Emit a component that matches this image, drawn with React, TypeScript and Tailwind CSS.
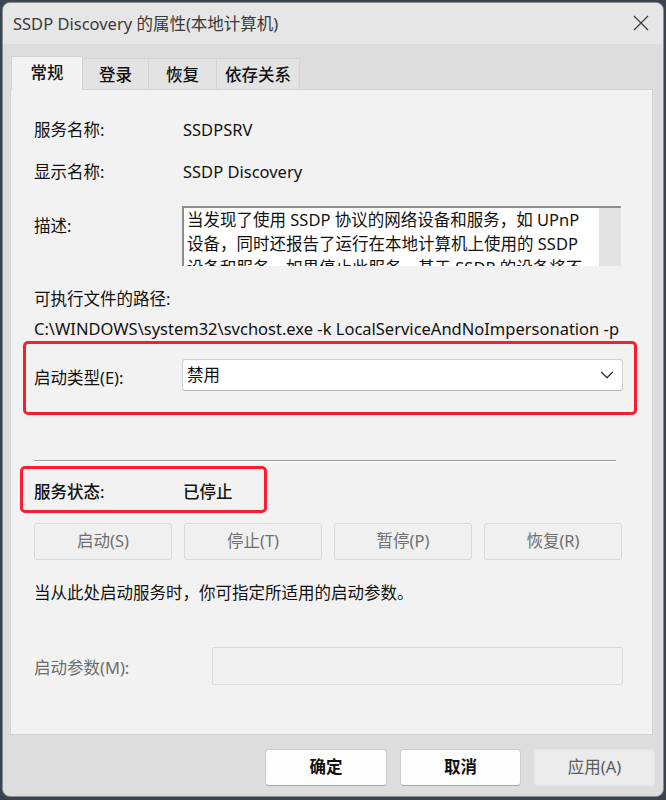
import React from 'react';
import { ChevronDown } from 'lucide-react';

const font = { fontFamily: '"Noto Sans", "Noto Sans CJK SC", sans-serif' };

const tabs = [
  { label: '常规', w: 'w-[72px]', active: true },
  { label: '登录', w: 'w-[66px]', active: false },
  { label: '恢复', w: 'w-[68px]', active: false },
  { label: '依存关系', w: 'w-[83px]', active: false },
];

const serviceButtons = ['启动(S)', '停止(T)', '暂停(P)', '恢复(R)'];

export default function App() {
  return (
    <div className="w-[666px] h-[800px] bg-[#3a4350] pt-[2px] pl-[2px]" style={font}>
      <div className="w-[662px] h-[795px] rounded-[8px] border border-[#8c8c8c] bg-[#dddddd] overflow-hidden flex flex-col text-[16.5px] text-[#111]">
        {/* Title bar */}
        <div className="h-[41px] bg-[#e6e6e6] flex items-center justify-between pl-[10px] pr-[14px] shrink-0">
          <span className="text-[16.5px] text-[#3a3a3a] pt-[1px]">SSDP Discovery 的属性(本地计算机)</span>
          <svg width="16" height="16" viewBox="0 0 16 16" className="mt-[-1px]">
            <path d="M1 1L15 15M15 1L1 15" stroke="#404040" strokeWidth="1.3" fill="none" />
          </svg>
        </div>

        {/* Body */}
        <div className="flex-1 pl-[7px] pr-[8px]">
          {/* Tabs */}
          <div className="flex items-end h-[45px] pl-px">
            {tabs.map((t) =>
              t.active ? (
                <div
                  key={t.label}
                  className={`${t.w} h-[34px] -mb-px relative z-10 bg-[#f2f2f2] border border-b-0 border-[#d3d3d3] flex items-center justify-center font-medium`}
                >
                  {t.label}
                </div>
              ) : (
                <div
                  key={t.label}
                  className={`${t.w} h-[31px] bg-[#e3e3e3] border border-l-0 border-b-0 border-[#d3d3d3] flex items-center justify-center pt-[2px] font-medium`}
                >
                  {t.label}
                </div>
              )
            )}
          </div>

          {/* Panel */}
          <div className="w-[643px] h-[646px] bg-[#f2f2f2] border border-[#d3d3d3] pl-[23px] flex flex-col">
            <div className="mt-[30px] h-[20px] flex items-center">
              <span className="w-[149px]">服务名称:</span>
              <span>SSDPSRV</span>
            </div>
            <div className="mt-[22px] h-[20px] flex items-center">
              <span className="w-[149px]">显示名称:</span>
              <span>SSDP Discovery</span>
            </div>
            <div className="mt-[24px] flex items-start">
              <span className="w-[148px] mt-[10px] h-[20px] flex items-center">描述:</span>
              <div className="w-[439px] h-[60px] bg-white border-t-2 border-l-2 border-[#8f8f8f] flex overflow-hidden">
                <div className="flex-1 pl-[3px] leading-[24px] whitespace-nowrap overflow-hidden">
                  <div>当发现了使用 SSDP 协议的网络设备和服务，如 UPnP</div>
                  <div>设备，同时还报告了运行在本地计算机上使用的 SSDP</div>
                  <div>设备和服务。如果停止此服务，基于 SSDP 的设备将不</div>
                </div>
                <div className="w-[22px] h-full bg-[#e3e3e3]" />
              </div>
            </div>
            <div className="mt-[23px] h-[20px] flex items-center">可执行文件的路径:</div>
            <div className="mt-[10px] h-[20px] w-[588px] overflow-hidden whitespace-nowrap flex items-center">
              C:\WINDOWS\system32\svchost.exe -k LocalServiceAndNoImpersonation -p
            </div>

            {/* Startup type (highlighted) */}
            <div className="mt-[2px] -ml-[11px] w-[614px] h-[74px] border-[3px] border-[#fb1c2f] rounded-[5px] pl-[8px] pb-[6px] flex items-center">
              <span className="w-[148px] mt-[6px]">启动类型(E):</span>
              <div className="w-[441px] h-[32px] bg-white border border-[#cfcfcf] border-b-[#b5b5b5] rounded-[3px] flex items-center justify-between pl-[4px] pr-[4px]">
                <span>禁用</span>
                <ChevronDown size={22} strokeWidth={1.4} className="text-[#333]" />
              </div>
            </div>

            <div className="mt-[45px] w-[582px] h-px bg-[#9a9a9a] border-b border-white box-content" />

            {/* Service status (highlighted) */}
            <div className="mt-[4px] -ml-[14px] w-[247px] h-[47px] border-[3px] border-[#fb1c2f] rounded-[5px] pl-[11px] pt-[5px] flex items-center font-medium">
              <span className="w-[149px]">服务状态:</span>
              <span>已停止</span>
            </div>

            <div className="mt-[10px] w-[588px] grid grid-cols-4 gap-3">
              {serviceButtons.map((b) => (
                <div
                  key={b}
                  className="h-[37px] bg-[#f0f0f0] border border-[#d9d9d9] rounded-[3px] flex items-center justify-center text-[#6f6f6f]"
                >
                  {b}
                </div>
              ))}
            </div>

            <div className="mt-[23px] h-[20px] flex items-center">当从此处启动服务时，你可指定所适用的启动参数。</div>

            <div className="mt-[44px] h-[38px] flex items-center">
              <span className="w-[178px] mt-[4px] text-[#6d6d6d]">启动参数(M):</span>
              <div className="w-[411px] h-full bg-[#f0f0f0] border border-[#dadada] rounded-[2px]" />
            </div>
          </div>

          {/* Footer buttons */}
          <div className="mt-[14px] flex justify-end gap-[13px]">
            <div className="w-[122px] h-[37px] bg-[#fdfdfd] border border-[#cccccc] border-b-[#a8a8a8] rounded-[4px] flex items-center justify-center font-semibold">
              确定
            </div>
            <div className="w-[121px] h-[37px] bg-[#fdfdfd] border border-[#cccccc] border-b-[#a8a8a8] rounded-[4px] flex items-center justify-center font-semibold">
              取消
            </div>
            <div className="w-[121px] h-[37px] bg-[#ebebeb] border border-[#e6e6e6] rounded-[4px] flex items-center justify-center text-[#5a5a5a]">
              应用(A)
            </div>
          </div>
        </div>
      </div>
    </div>
  );
}
